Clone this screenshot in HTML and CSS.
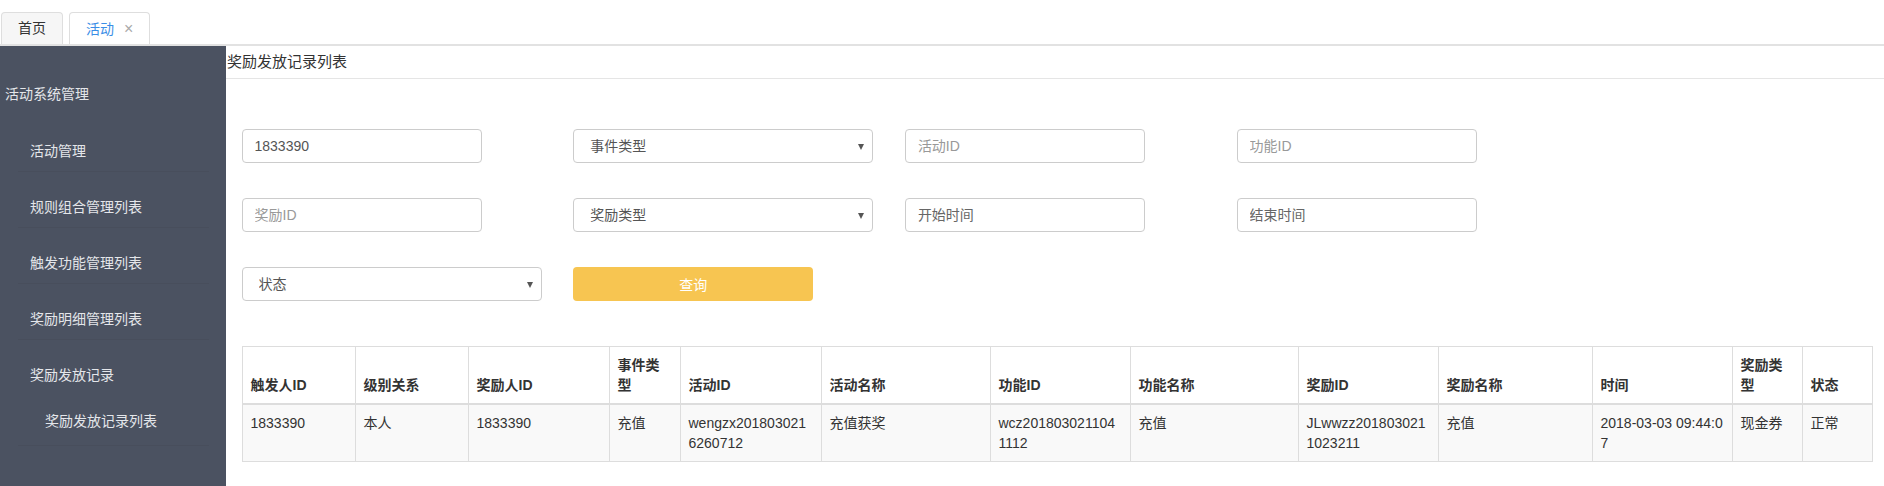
FILE: index.html
```html
<!DOCTYPE html>
<html lang="zh-CN">
<head>
<meta charset="utf-8">
<title>奖励发放记录列表</title>
<link rel="stylesheet" href="styles.css">
</head>
<body>
<div class="tabbar">
  <div class="tab">首页</div>
  <div class="tab active">活动<span class="close">×</span></div>
</div>
<div class="layout">
  <aside class="sidebar">
    <div class="side-title">活动系统管理</div>
    <div class="side-item">活动管理</div>
    <div class="side-item">规则组合管理列表</div>
    <div class="side-item">触发功能管理列表</div>
    <div class="side-item">奖励明细管理列表</div>
    <div class="side-item nob">奖励发放记录</div>
    <div class="side-sub">奖励发放记录列表</div>
  </aside>
  <main class="main">
    <div class="page-head">奖励发放记录列表</div>
    <form class="filters">
      <input class="field" type="text" value="1833390">
      <div class="select-wrap wide"><select class="field sel"><option>事件类型</option></select></div>
      <input class="field" type="text" placeholder="活动ID">
      <input class="field" type="text" placeholder="功能ID">
      <input class="field" type="text" placeholder="奖励ID">
      <div class="select-wrap wide"><select class="field sel"><option>奖励类型</option></select></div>
      <input class="field dark" type="text" placeholder="开始时间">
      <input class="field dark" type="text" placeholder="结束时间">
      <div class="select-wrap wide"><select class="field sel"><option>状态</option></select></div>
      <button class="btn" type="button">查询</button>
    </form>
    <table class="grid">
      <colgroup>
        <col style="width:113px"><col style="width:113px"><col style="width:141px"><col style="width:71px">
        <col style="width:141px"><col style="width:169px"><col style="width:140px"><col style="width:168px">
        <col style="width:140px"><col style="width:154px"><col style="width:140px"><col style="width:70px"><col style="width:70px">
      </colgroup>
      <thead>
        <tr>
          <th>触发人ID</th><th>级别关系</th><th>奖励人ID</th><th>事件类型</th><th>活动ID</th><th>活动名称</th>
          <th>功能ID</th><th>功能名称</th><th>奖励ID</th><th>奖励名称</th><th>时间</th><th>奖励类型</th><th>状态</th>
        </tr>
      </thead>
      <tbody>
        <tr>
          <td>1833390</td><td>本人</td><td>1833390</td><td>充值</td><td>wengzx2018030216260712</td><td>充值获奖</td>
          <td>wcz2018030211041112</td><td>充值</td><td>JLwwzz2018030211023211</td><td>充值</td><td>2018-03-03 09:44:07</td><td>现金券</td><td>正常</td>
        </tr>
      </tbody>
    </table>
  </main>
</div>
</body>
</html>
```

FILE: styles.css
```css
* { box-sizing: border-box; }
html, body { margin: 0; padding: 0; }
body {
  font-family: "Liberation Sans", "Noto Sans CJK SC", sans-serif;
  font-size: 14px;
  line-height: 20px;
  color: #333;
  background: #fff;
  height: 486px;
  overflow: hidden;
}

.tabbar {
  height: 46px;
  padding: 12px 0 0 1px;
  display: flex;
  gap: 6px;
  border-bottom: 2px solid #e2e2e2;
}
.tab {
  height: 32px;
  line-height: 31px;
  padding: 0 16px;
  border: 1px solid #dedede;
  border-bottom: none;
  border-radius: 4px 4px 0 0;
  background: #f6f6f6;
  color: #333;
  font-size: 14px;
}
.tab.active {
  background: #fff;
  color: #3a8ee6;
}
.close {
  color: #aaa;
  font-size: 16px;
  margin-left: 10px;
}

.layout {
  display: flex;
  height: 440px;
}
.sidebar {
  width: 226px;
  flex: none;
  background: #4b5261;
  color: #e4e6ea;
}
.side-title {
  height: 70px;
  padding: 38px 0 0 5px;
  line-height: 20px;
}
.side-item {
  height: 56px;
  margin: 0 17px 0 18px;
  padding: 25px 0 10px 12px;
  line-height: 20px;
  border-bottom: 1px solid #484e5c;
}
.side-item.nob { border-bottom: none; }
.side-sub {
  height: 50px;
  margin: 0 17px 0 18px;
  padding: 15px 0 14px 27px;
  line-height: 20px;
  border-bottom: 1px solid #484e5c;
}

.main {
  flex: 1;
  min-width: 0;
}
.page-head {
  height: 33px;
  line-height: 32px;
  padding-left: 1px;
  font-size: 15px;
  color: #333;
  border-bottom: 1px solid #e5e5e5;
}

.filters {
  display: grid;
  grid-template-columns: repeat(4, 331.7px);
  grid-auto-rows: 34px;
  row-gap: 35px;
  padding: 50px 0 0 15.5px;
  margin: 0;
}
.field {
  width: 240px;
  height: 34px;
  border: 1px solid #ccc;
  border-radius: 4px;
  padding: 0 12px;
  font-family: inherit;
  font-size: 14px;
  color: #555;
  background: #fff;
  outline: none;
}
.field::placeholder { color: #999; }
.field.dark::placeholder { color: #666; }
.select-wrap {
  position: relative;
  width: 300px;
}
.select-wrap::after {
  content: "";
  position: absolute;
  right: 9px;
  top: 15px;
  border-left: 3.5px solid transparent;
  border-right: 3.5px solid transparent;
  border-top: 6px solid #555;
}
.sel {
  width: 300px;
  appearance: none;
  -webkit-appearance: none;
  padding-left: 16px;
  color: #555;
}
.btn {
  width: 240px;
  height: 34px;
  border: none;
  border-radius: 4px;
  background: #f7c551;
  color: #fff;
  font-family: inherit;
  font-size: 14px;
}

.grid {
  margin: 45px 0 0 15.5px;
  width: 1630px;
  table-layout: fixed;
  border-collapse: collapse;
  border: 1px solid #ddd;
}
.grid th, .grid td {
  border: 1px solid #ddd;
  padding: 8px;
  line-height: 20px;
  text-align: left;
  word-break: break-all;
}
.grid th {
  vertical-align: bottom;
  font-weight: bold;
  border-bottom: 2px solid #ddd;
  background: #fff;
}
.grid td {
  vertical-align: top;
  background: #f9f9f9;
}
```
